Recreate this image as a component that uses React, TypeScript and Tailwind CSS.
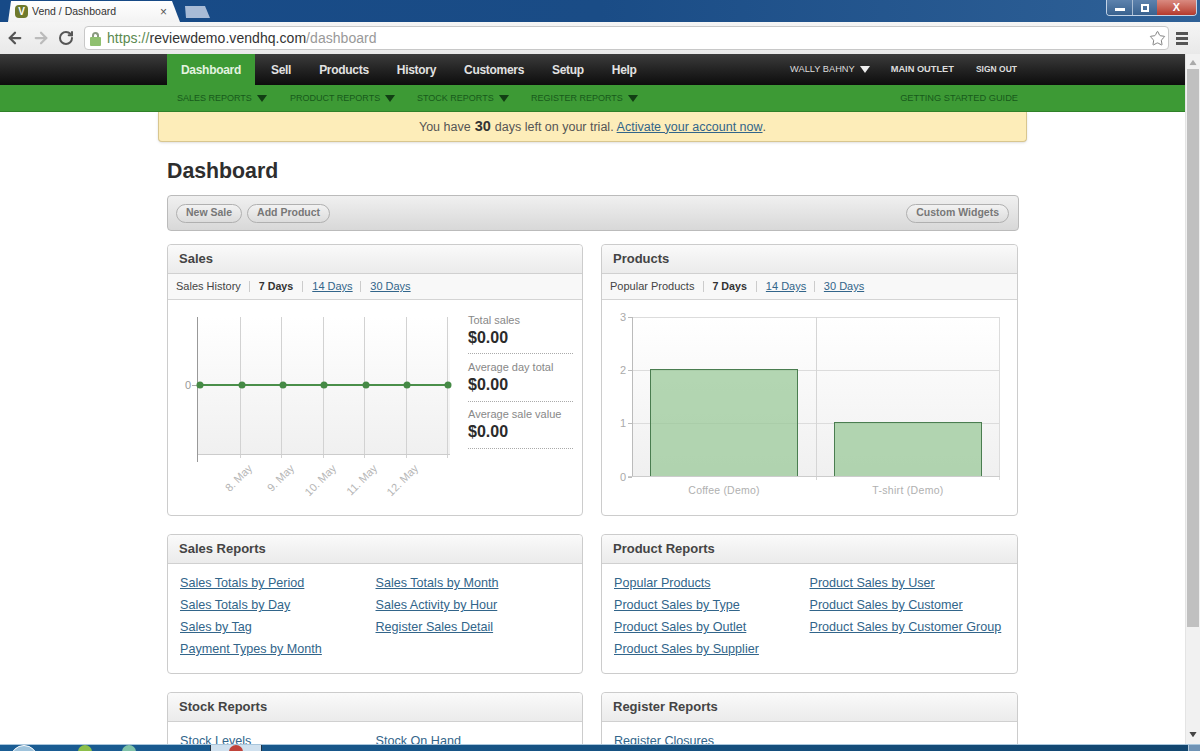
import React from 'react';
import { ArrowLeft, ArrowRight, RotateCw, Star } from 'lucide-react';

const Caret: React.FC<{ className?: string }> = ({ className }) => (
  <svg width="10" height="7" viewBox="0 0 10 7" className={className}>
    <path d="M0 0h10L5 7z" fill="currentColor" />
  </svg>
);

const navItems = ['Sell', 'Products', 'History', 'Customers', 'Setup', 'Help'];

const subItems = [
  { label: 'SALES REPORTS', width: 'w-[113px]' },
  { label: 'PRODUCT REPORTS', width: 'w-[127px]' },
  { label: 'STOCK REPORTS', width: 'w-[114px]' },
  { label: 'REGISTER REPORTS', width: 'w-[120px]' },
];

const BrowserChrome: React.FC = () => (
  <>
    <div className="h-[22px] shrink-0 flex justify-between bg-gradient-to-r from-[#174a87] via-[#1a4c86] to-[#2f6197] relative">
      <div className="flex items-end pl-2">
        <div className="w-[172px] h-[21px] bg-gradient-to-b from-white to-[#f3f3f3] flex items-center pl-[7px] pr-2 [clip-path:polygon(3px_0,calc(100%-8px)_0,100%_100%,0_100%)]">
          <div className="w-[13px] h-[13px] rounded-sm bg-[#6f7a2c] text-white text-[10px] font-bold flex items-center justify-center">V</div>
          <span className="ml-[4px] text-[10.5px] text-[#333]">Vend / Dashboard</span>
          <span className="ml-auto mr-[5px] text-[12px] text-[#555]">×</span>
        </div>
        <div className="ml-[3px] mb-[4px] w-[27px] h-[12px] bg-[#a8bbd6] [clip-path:polygon(2px_0,calc(100%-5px)_0,100%_100%,3px_100%)]" />
      </div>
      <div className="flex h-[16px] mr-[3px] w-[91px] rounded-b border border-t-0 border-[#c3d3e6] overflow-hidden">
        <div className="w-[26px] bg-gradient-to-b from-[#5d82ad] to-[#39628f] flex items-center justify-center border-r border-[#a9bdd4]">
          <div className="w-[10px] h-[3px] mt-[3px] bg-white" />
        </div>
        <div className="w-[24px] bg-gradient-to-b from-[#5d82ad] to-[#39628f] flex items-center justify-center">
          <div className="w-[8px] h-[8px] border-2 border-white" />
        </div>
        <div className="flex-1 bg-gradient-to-b from-[#d98a80] to-[#b5392c] flex items-center justify-center text-white text-[11px] font-bold">X</div>
      </div>
    </div>
    <div className="h-[32px] shrink-0 flex items-center bg-gradient-to-b from-[#f5f5f5] to-[#e9e9e9]">
      <div className="w-[84px] flex items-center pl-[6px] gap-[8px] text-[#555]">
        <ArrowLeft size={18} strokeWidth={3} />
        <ArrowRight size={18} strokeWidth={3} className="text-[#bbb]" />
        <RotateCw size={16} strokeWidth={3} />
      </div>
      <div className="w-[1085px] h-[24px] bg-white border border-[#c8c8c8] rounded-sm flex items-center pl-[5px]">
        <div className="relative w-[11px] h-[14px] mt-[1px]">
          <div className="absolute top-0 left-[2px] w-[7px] h-[7px] rounded-t-full border-2 border-b-0 border-[#8a9a80]" />
          <div className="absolute bottom-0 left-0 w-[11px] h-[9px] rounded-[1px] bg-[#8fc06f]" />
        </div>
        <span className="ml-[6px] text-[14px] tracking-[0.05px] text-[#5b8a50]">https://</span>
        <span className="text-[14px] tracking-[0.05px] text-[#333]">reviewdemo.vendhq.com</span>
        <span className="text-[14px] tracking-[0.05px] text-[#999]">/dashboard</span>
        <Star size={17} strokeWidth={1.3} className="ml-auto mr-[2px] text-[#777]" />
      </div>
      <div className="ml-[7px] w-[12px] flex flex-col gap-[2px]">
        <div className="h-[3px] bg-[#555]" />
        <div className="h-[3px] bg-[#555]" />
        <div className="h-[3px] bg-[#555]" />
      </div>
    </div>
  </>
);

const TopNav: React.FC = () => (
  <>
    <div className="h-[31px] shrink-0 bg-gradient-to-b from-[#3c3c3c] to-[#0d0d0d]">
      <div className="w-[851px] h-full mx-auto flex items-center">
        <div className="h-full px-[14px] bg-[#3d9a35] flex items-center text-[12px] tracking-[-0.3px] font-bold text-[#e4f3e0] w-[88px] whitespace-nowrap">Dashboard</div>
        <div className="flex items-center gap-[28px] pl-[16px] text-[12px] tracking-[-0.3px] font-bold text-[#e2e2e2]">
          {navItems.map((item) => (
            <span key={item}>{item}</span>
          ))}
        </div>
        <div className="ml-auto flex items-center text-[9.25px] text-[#ddd]">
          <span>WALLY BAHNY</span>
          <Caret className="ml-[5px] text-[#eee]" />
          <span className="ml-[21px] font-bold">MAIN OUTLET</span>
          <span className="ml-[22px] mr-[1px] text-[8.5px] font-bold">SIGN OUT</span>
        </div>
      </div>
    </div>
    <div className="h-[27px] shrink-0 bg-[#3d9a35] border-b border-[#2f8129]">
      <div className="w-[851px] h-full mx-auto pt-[1px] flex items-center text-[9px] text-[#17591b]">
        <div className="w-[10px]" />
        {subItems.map((s) => (
          <div key={s.label} className={`flex items-center whitespace-nowrap ${s.width}`}>
            <span>{s.label}</span>
            <Caret className="ml-[5px] text-[#123f14]" />
          </div>
        ))}
        <span className="ml-auto text-[9.25px] whitespace-nowrap">GETTING STARTED GUIDE</span>
      </div>
    </div>
  </>
);

const PanelHead: React.FC<{ title: string }> = ({ title }) => (
  <div className="h-[29px] pl-[11px] flex items-center bg-gradient-to-b from-[#fafafa] to-[#ebebeb] border-b border-[#d0d0d0] rounded-t text-[13px] font-bold text-[#444]">
    {title}
  </div>
);

const RangeRow: React.FC<{ label: string }> = ({ label }) => (
  <div className="h-[26px] pl-[8px] flex items-center whitespace-nowrap bg-[#f8f8f8] border-b border-[#d4d4d4] text-[11px] text-[#444]">
    <span>{label}</span>
    <span className="mx-[8.5px] h-[11px] w-px bg-[#ccc]" />
    <span className="font-bold text-[10.7px] text-[#333]">7 Days</span>
    <span className="mx-[9px] h-[11px] w-px bg-[#ccc]" />
    <span className="underline text-[#32658a] w-[39px]">14 Days</span>
    <span className="mx-[9px] h-[11px] w-px bg-[#ccc]" />
    <span className="underline text-[#32658a]">30 Days</span>
  </div>
);

const SalesChart: React.FC = () => {
  const grid = [72.5, 113.5, 155.5, 196.5, 238.5, 279.5];
  const dots = [32, 74, 115, 156, 198, 239, 280];
  const labels = [
    { x: 85, t: '8. May' },
    { x: 127, t: '9. May' },
    { x: 169, t: '10. May' },
    { x: 210, t: '11. May' },
    { x: 251, t: '12. May' },
  ];
  return (
    <svg width="295" height="215" className="shrink-0">
      <defs>
        <linearGradient id="plotA" x1="0" y1="0" x2="0" y2="1">
          <stop offset="0" stopColor="#ffffff" />
          <stop offset="1" stopColor="#f0f0f0" />
        </linearGradient>
      </defs>
      <rect x="30" y="17" width="252" height="137" fill="url(#plotA)" />
      <line x1="29.5" y1="17" x2="29.5" y2="162" stroke="#999" />
      {grid.map((x) => (
        <line key={x} x1={x} y1="17" x2={x} y2="158" stroke="#d2d2d2" />
      ))}
      <line x1="30" y1="154.5" x2="282" y2="154.5" stroke="#ccc" />
      <line x1="24" y1="85.5" x2="30" y2="85.5" stroke="#aaa" />
      <text x="17" y="89" fontSize="11" fill="#999">0</text>
      <line x1="32" y1="85" x2="280" y2="85" stroke="#4a8f4a" strokeWidth="2" />
      {dots.map((x) => (
        <circle key={x} cx={x} cy="85" r="3.5" fill="#458a45" />
      ))}
      {labels.map((l) => (
        <text key={l.t} x={l.x} y="169" fontSize="11" fill="#b5b5b5" textAnchor="end" transform={`rotate(-45 ${l.x} 169)`}>
          {l.t}
        </text>
      ))}
    </svg>
  );
};

const ProductsChart: React.FC = () => (
  <svg width="415" height="215">
    <defs>
      <linearGradient id="plotB" x1="0" y1="0" x2="0" y2="1">
        <stop offset="0" stopColor="#ffffff" />
        <stop offset="1" stopColor="#f0f0f0" />
      </linearGradient>
    </defs>
    <rect x="30" y="17" width="368" height="159" fill="url(#plotB)" />
    {[17.5, 70.5, 123.5].map((y) => (
      <line key={y} x1="30" y1={y} x2="398" y2={y} stroke="#dcdcdc" />
    ))}
    <line x1="30.5" y1="17" x2="30.5" y2="176" stroke="#bbb" />
    <line x1="214.5" y1="17" x2="214.5" y2="180" stroke="#d5d5d5" />
    <line x1="397.5" y1="17" x2="397.5" y2="180" stroke="#dcdcdc" />
    <rect x="48.5" y="69.5" width="147" height="107" fill="#97c896" fillOpacity="0.72" stroke="#4a7d50" />
    <rect x="232.5" y="122.5" width="147" height="54" fill="#97c896" fillOpacity="0.72" stroke="#4a7d50" />
    <line x1="26" y1="176.5" x2="398" y2="176.5" stroke="#ccc" />
    {[
      { y: 21, t: '3' },
      { y: 74, t: '2' },
      { y: 127, t: '1' },
      { y: 181, t: '0' },
    ].map((l) => (
      <g key={l.t}>
        <line x1="26" y1={l.y - 3.5} x2="30" y2={l.y - 3.5} stroke="#bbb" />
        <text x="18" y={l.y} fontSize="11" fill="#aaa">{l.t}</text>
      </g>
    ))}
    <text x="122" y="194" fontSize="10.5" letterSpacing="0.2" fill="#b0b0b0" textAnchor="middle">Coffee (Demo)</text>
    <text x="306" y="194" fontSize="10.5" letterSpacing="0.3" fill="#b0b0b0" textAnchor="middle">T-shirt (Demo)</text>
  </svg>
);

const Stat: React.FC<{ label: string; className: string }> = ({ label, className }) => (
  <div className={`border-b border-dotted border-[#aaa] ${className}`}>
    <div className="text-[11px] leading-[13px] text-[#888]">{label}</div>
    <div className="mt-[1px] text-[16px] leading-[20px] font-bold text-[#2b2b2b]">$0.00</div>
  </div>
);

const ReportPanel: React.FC<{ title: string; left: string[]; right: string[]; height: string }> = ({
  title,
  left,
  right,
  height,
}) => (
  <section className={`border border-[#ccc] rounded bg-white ${height}`}>
    <PanelHead title={title} />
    <div className="flex pt-[8px] pl-[12px] text-[12.6px] leading-[22px] text-[#32658a] underline">
      <div className="w-[195.5px]">
        {left.map((l) => (
          <div key={l}>{l}</div>
        ))}
      </div>
      <div>
        {right.map((l) => (
          <div key={l}>{l}</div>
        ))}
      </div>
    </div>
  </section>
);

export default function App() {
  return (
    <div className="w-[1200px] h-[751px] overflow-hidden flex flex-col bg-white font-['Liberation_Sans',sans-serif]">
      <BrowserChrome />
      <div className="flex-1 min-h-0 flex">
        <div className="w-[1185px] flex flex-col">
          <TopNav />
          <main className="flex-1 min-h-0 overflow-hidden">
            <div className="w-[869px] h-[30px] pt-[1px] mx-auto bg-[#fdedb9] border border-t-0 border-[#d8c68f] rounded-b shadow-sm flex items-center justify-center text-[12.5px] text-[#555]">
              <span>You have </span>
              <b className="mx-[4px] text-[14.5px] text-[#333]">30</b>
              <span>days left on your trial. </span>
              <span className="ml-[3px] underline text-[#32658a]">Activate your account now</span>
              <span>.</span>
            </div>
            <div className="w-[851px] mx-auto">
              <h1 className="mt-[15px] h-[28px] leading-[28px] text-[21.3px] font-bold text-[#2e2e2e]">Dashboard</h1>
              <div className="mt-[10px] w-[852px] h-[36px] pl-[8px] pr-[9px] flex items-center justify-between border border-[#bbb] rounded bg-gradient-to-b from-[#f0f0f0] to-[#d8d8d8] text-[10.5px] font-bold text-[#777]">
                <div className="flex gap-[5px]">
                  <span className="h-[19px] px-[9px] flex items-center rounded-full border border-[#b0b0b0] bg-gradient-to-b from-[#f2f2f2] to-[#dcdcdc]">New Sale</span>
                  <span className="h-[19px] px-[9px] flex items-center rounded-full border border-[#b0b0b0] bg-gradient-to-b from-[#f2f2f2] to-[#dcdcdc]">Add Product</span>
                </div>
                <span className="h-[19px] px-[9px] flex items-center rounded-full border border-[#b0b0b0] bg-gradient-to-b from-[#f2f2f2] to-[#dcdcdc]">Custom Widgets</span>
              </div>
              <div className="mt-[13px] grid grid-cols-[416px_417px] gap-x-[18px] gap-y-[18px]">
                <section className="h-[272px] border border-[#ccc] rounded">
                  <PanelHead title="Sales" />
                  <RangeRow label="Sales History" />
                  <div className="flex">
                    <SalesChart />
                    <div className="ml-[5px] w-[105px] pt-[14px]">
                      <Stat label="Total sales" className="h-[40px]" />
                      <Stat label="Average day total" className="mt-[7px] h-[41px]" />
                      <Stat label="Average sale value" className="mt-[6px] h-[41px]" />
                    </div>
                  </div>
                </section>
                <section className="h-[272px] border border-[#ccc] rounded">
                  <PanelHead title="Products" />
                  <RangeRow label="Popular Products" />
                  <ProductsChart />
                </section>
                <ReportPanel
                  title="Sales Reports"
                  height="h-[140px]"
                  left={['Sales Totals by Period', 'Sales Totals by Day', 'Sales by Tag', 'Payment Types by Month']}
                  right={['Sales Totals by Month', 'Sales Activity by Hour', 'Register Sales Detail']}
                />
                <ReportPanel
                  title="Product Reports"
                  height="h-[140px]"
                  left={['Popular Products', 'Product Sales by Type', 'Product Sales by Outlet', 'Product Sales by Supplier']}
                  right={['Product Sales by User', 'Product Sales by Customer', 'Product Sales by Customer Group']}
                />
                <ReportPanel
                  title="Stock Reports"
                  height="h-[140px]"
                  left={['Stock Levels']}
                  right={['Stock On Hand']}
                />
                <ReportPanel
                  title="Register Reports"
                  height="h-[140px]"
                  left={['Register Closures']}
                  right={[]}
                />
              </div>
            </div>
          </main>
        </div>
        <div className="w-[15px] bg-[#f1f1f1] border-l border-[#e4e4e4] flex flex-col items-center pt-[5px] text-[#666]">
          <Caret className="rotate-180 scale-75 text-[#aaa]" />
          <div className="mt-[3px] w-[12px] h-[558px] bg-[#c0c0c0]" />
          <Caret className="mt-[104px] scale-75 text-[#444]" />
        </div>
      </div>
      <div className="h-[7px] shrink-0 flex bg-gradient-to-r from-[#1a5d94] to-[#12466f] border-t border-[#a9c6dc] overflow-hidden">
        <div className="ml-[10px] w-[28px] h-[28px] rounded-full bg-[#9ec3dc] border border-white" />
        <div className="ml-[40px] w-[14px] h-[14px] rounded-full bg-[#8cbf4a]" />
        <div className="ml-[30px] w-[14px] h-[14px] rounded-full bg-[#7fc2a8]" />
        <div className="ml-[74px] w-[52px] bg-[#cfe0ee] border-x border-[#234] flex justify-center">
          <div className="w-[14px] h-[14px] rounded-full bg-[#c0433a]" />
        </div>
        <div className="ml-auto w-[12px] bg-[#6f93b5] border-l border-[#b5cbdd]" />
      </div>
    </div>
  );
}
